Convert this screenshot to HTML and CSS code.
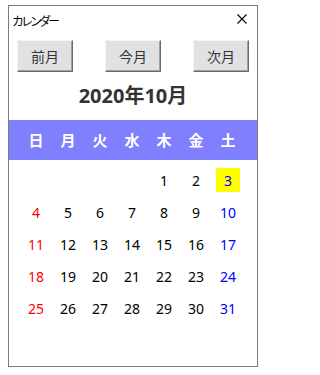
FILE: index.html
```html
<!DOCTYPE html>
<html lang="ja">
<head>
<meta charset="utf-8">
<title>カレンダー</title>
<link rel="stylesheet" href="styles.css">
</head>
<body>
<div class="window">
  <div class="titlebar">
    <span class="title">カレンダー</span>
    <svg class="close" width="10" height="10" viewBox="0 0 10 10"><path d="M0.5 0.5 L9.5 9.5 M9.5 0.5 L0.5 9.5" stroke="#000" stroke-width="1.1" fill="none"/></svg>
  </div>
  <div class="buttons">
    <button class="btn">前月</button>
    <button class="btn">今月</button>
    <button class="btn">次月</button>
  </div>
  <div class="month">2020年10月</div>
  <div class="weekdays">
    <span>日</span><span>月</span><span>火</span><span>水</span><span>木</span><span>金</span><span>土</span>
  </div>
  <div class="days">
    <span></span><span></span><span></span><span></span><span>1</span><span>2</span><span class="sat"><b class="today">3</b></span>
    <span class="sun">4</span><span>5</span><span>6</span><span>7</span><span>8</span><span>9</span><span class="sat">10</span>
    <span class="sun">11</span><span>12</span><span>13</span><span>14</span><span>15</span><span>16</span><span class="sat">17</span>
    <span class="sun">18</span><span>19</span><span>20</span><span>21</span><span>22</span><span>23</span><span class="sat">24</span>
    <span class="sun">25</span><span>26</span><span>27</span><span>28</span><span>29</span><span>30</span><span class="sat">31</span>
  </div>
</div>
</body>
</html>
```
FILE: styles.css
```css
html, body {
  margin: 0;
  padding: 0;
  background: #ffffff;
}
body {
  font-family: "Noto Sans", "Noto Sans CJK JP", sans-serif;
  color: #000;
}
.window {
  margin: 5px 0 0 8px;
  width: 248px;
  height: 360px;
  border: 1px solid #7a7a7a;
  background: #fff;
}
.titlebar {
  height: 27px;
  display: flex;
  align-items: center;
  justify-content: space-between;
  padding: 0 10px 0 3px;
}
.title {
  font-family: "Noto Sans CJK JP", sans-serif;
  font-size: 12px;
  letter-spacing: -3px;
  color: #000;
  margin-top: 2px;
}
.close {
  display: block;
  margin-top: -2px;
}
.buttons {
  display: flex;
  justify-content: space-between;
  padding: 7px 8px 0 8px;
}
.btn {
  width: 56px;
  height: 32px;
  margin: 0;
  padding: 0;
  background: #e1e1e1;
  border: 1px solid;
  border-color: #f4f4f4 #696969 #696969 #f4f4f4;
  box-shadow: inset -1px -1px 0 #a0a0a0;
  font-family: "Noto Sans CJK JP", sans-serif;
  font-size: 14px;
  color: #333;
  letter-spacing: 0;
}
.month {
  margin-top: 10px;
  height: 28px;
  line-height: 28px;
  text-align: center;
  font-family: "Noto Sans", "Noto Sans CJK JP", sans-serif;
  font-weight: bold;
  font-size: 20px;
  color: #333;
}
.weekdays {
  margin-top: 10px;
  height: 40px;
  background: #8080ff;
  display: grid;
  grid-template-columns: repeat(7, 32px);
  padding-left: 11px;
  align-items: center;
}
.weekdays span {
  text-align: center;
  color: #fff;
  font-family: "Noto Sans CJK JP", sans-serif;
  font-weight: bold;
  font-size: 15px;
  line-height: 20px;
}
.days {
  margin-top: 4px;
  display: grid;
  grid-template-columns: repeat(7, 32px);
  grid-auto-rows: 32px;
  padding-left: 11px;
}
.days span {
  display: flex;
  align-items: center;
  justify-content: center;
  font-size: 14px;
  color: #000;
}
.days .sun { color: #ff0000; }
.days .sat { color: #0000ff; }
.today {
  display: flex;
  align-items: center;
  justify-content: center;
  width: 24px;
  height: 24px;
  background: #ffff00;
  font-weight: normal;
}
```
